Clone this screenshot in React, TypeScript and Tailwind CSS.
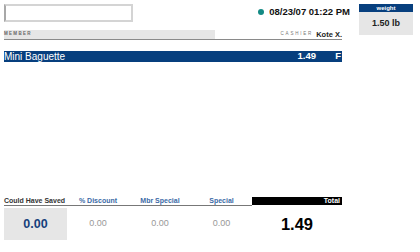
export default function App() {
  const cols = [
    { label: "% Discount", value: "0.00", w: "w-[62px]" },
    { label: "Mbr Special", value: "0.00", w: "w-[62px]" },
    { label: "Special", value: "0.00", w: "w-[61px]" },
  ];

  return (
    <div className="w-[420px] h-[252px] bg-white font-['Liberation_Sans',Arial,sans-serif] overflow-hidden">
      <div className="flex pt-[4px] pl-[4px]">
        {/* Left register area */}
        <div className="w-[346px] flex flex-col">
          {/* Top row: input + clock */}
          <div className="flex items-start h-[18px]">
            <div className="w-[129px] h-[18px] border-2 border-[#d4d4d4] border-l-[#a8a8a8] bg-white" />
            <div className="ml-auto flex items-center mt-[3px] gap-[5px]">
              <span className="w-[6px] h-[6px] rounded-full bg-[#138a84]" />
              <span className="text-[9.5px] font-bold text-[#111] leading-[10px]">08/23/07 01:22 PM</span>
            </div>
          </div>

          {/* Member / cashier */}
          <div className="w-[338px] mt-[8px] h-[10px] flex items-stretch border-b border-[#8a8a8a]">
            <div className="w-[211px] bg-[#e6e6e6] flex items-center">
              <span className="text-[4.5px] font-bold tracking-[1.3px] text-[#666]">MEMBER</span>
            </div>
            <div className="ml-auto flex items-center gap-[3px]">
              <span className="text-[4.5px] tracking-[1.8px] text-[#777]">CASHIER</span>
              <span className="text-[7.5px] font-bold text-[#222]">Kote X.</span>
            </div>
          </div>

          {/* Item row */}
          <div className="w-[338px] mt-[11px] h-[11px] bg-[#073f7e] flex items-center text-white">
            <span className="text-[10px] leading-[11px]">Mini Baguette</span>
            <span className="ml-auto text-[9.5px] font-bold">1.49</span>
            <span className="w-[26px] text-right text-[9.5px] font-bold pr-[1px]">F</span>
          </div>

          {/* Totals header */}
          <div className="w-[338px] mt-[135px] flex h-[9px]">
            <div className="w-[63px] border-b border-[#777] text-[7px] font-bold text-[#333] leading-[8px] whitespace-nowrap">
              Could Have Saved
            </div>
            {cols.map((c) => (
              <div
                key={c.label}
                className={`${c.w} border-b border-[#777] text-center text-[7px] font-bold text-[#3b6aa6] leading-[8px] whitespace-nowrap`}
              >
                {c.label}
              </div>
            ))}
            <div className="w-[90px] h-[8px] bg-black text-right text-white text-[7px] font-bold leading-[8px] pr-[2px]">
              Total
            </div>
          </div>

          {/* Totals values */}
          <div className="w-[338px] mt-[2px] flex h-[32px]">
            <div className="w-[63px] bg-[#e6e6e6] flex items-center justify-center">
              <span className="text-[12.5px] font-bold text-[#163f7c]">0.00</span>
            </div>
            {cols.map((c) => (
              <div key={c.label} className={`${c.w} flex items-center justify-center`}>
                <span className="text-[9px] text-[#999]">{c.value}</span>
              </div>
            ))}
            <div className="w-[90px] flex items-center justify-center">
              <span className="text-[16.5px] font-bold text-black">1.49</span>
            </div>
          </div>
        </div>

        {/* Weight box */}
        <div className="ml-[9px] w-[54px] h-[31px] bg-[#e6e6e6] flex flex-col">
          <div className="h-[8px] bg-[#073f7e] text-white text-[6px] font-bold text-center leading-[8px]">weight</div>
          <div className="flex-1 flex items-center justify-center">
            <span className="text-[9px] font-bold text-[#222]">1.50 lb</span>
          </div>
        </div>
      </div>
    </div>
  );
}
